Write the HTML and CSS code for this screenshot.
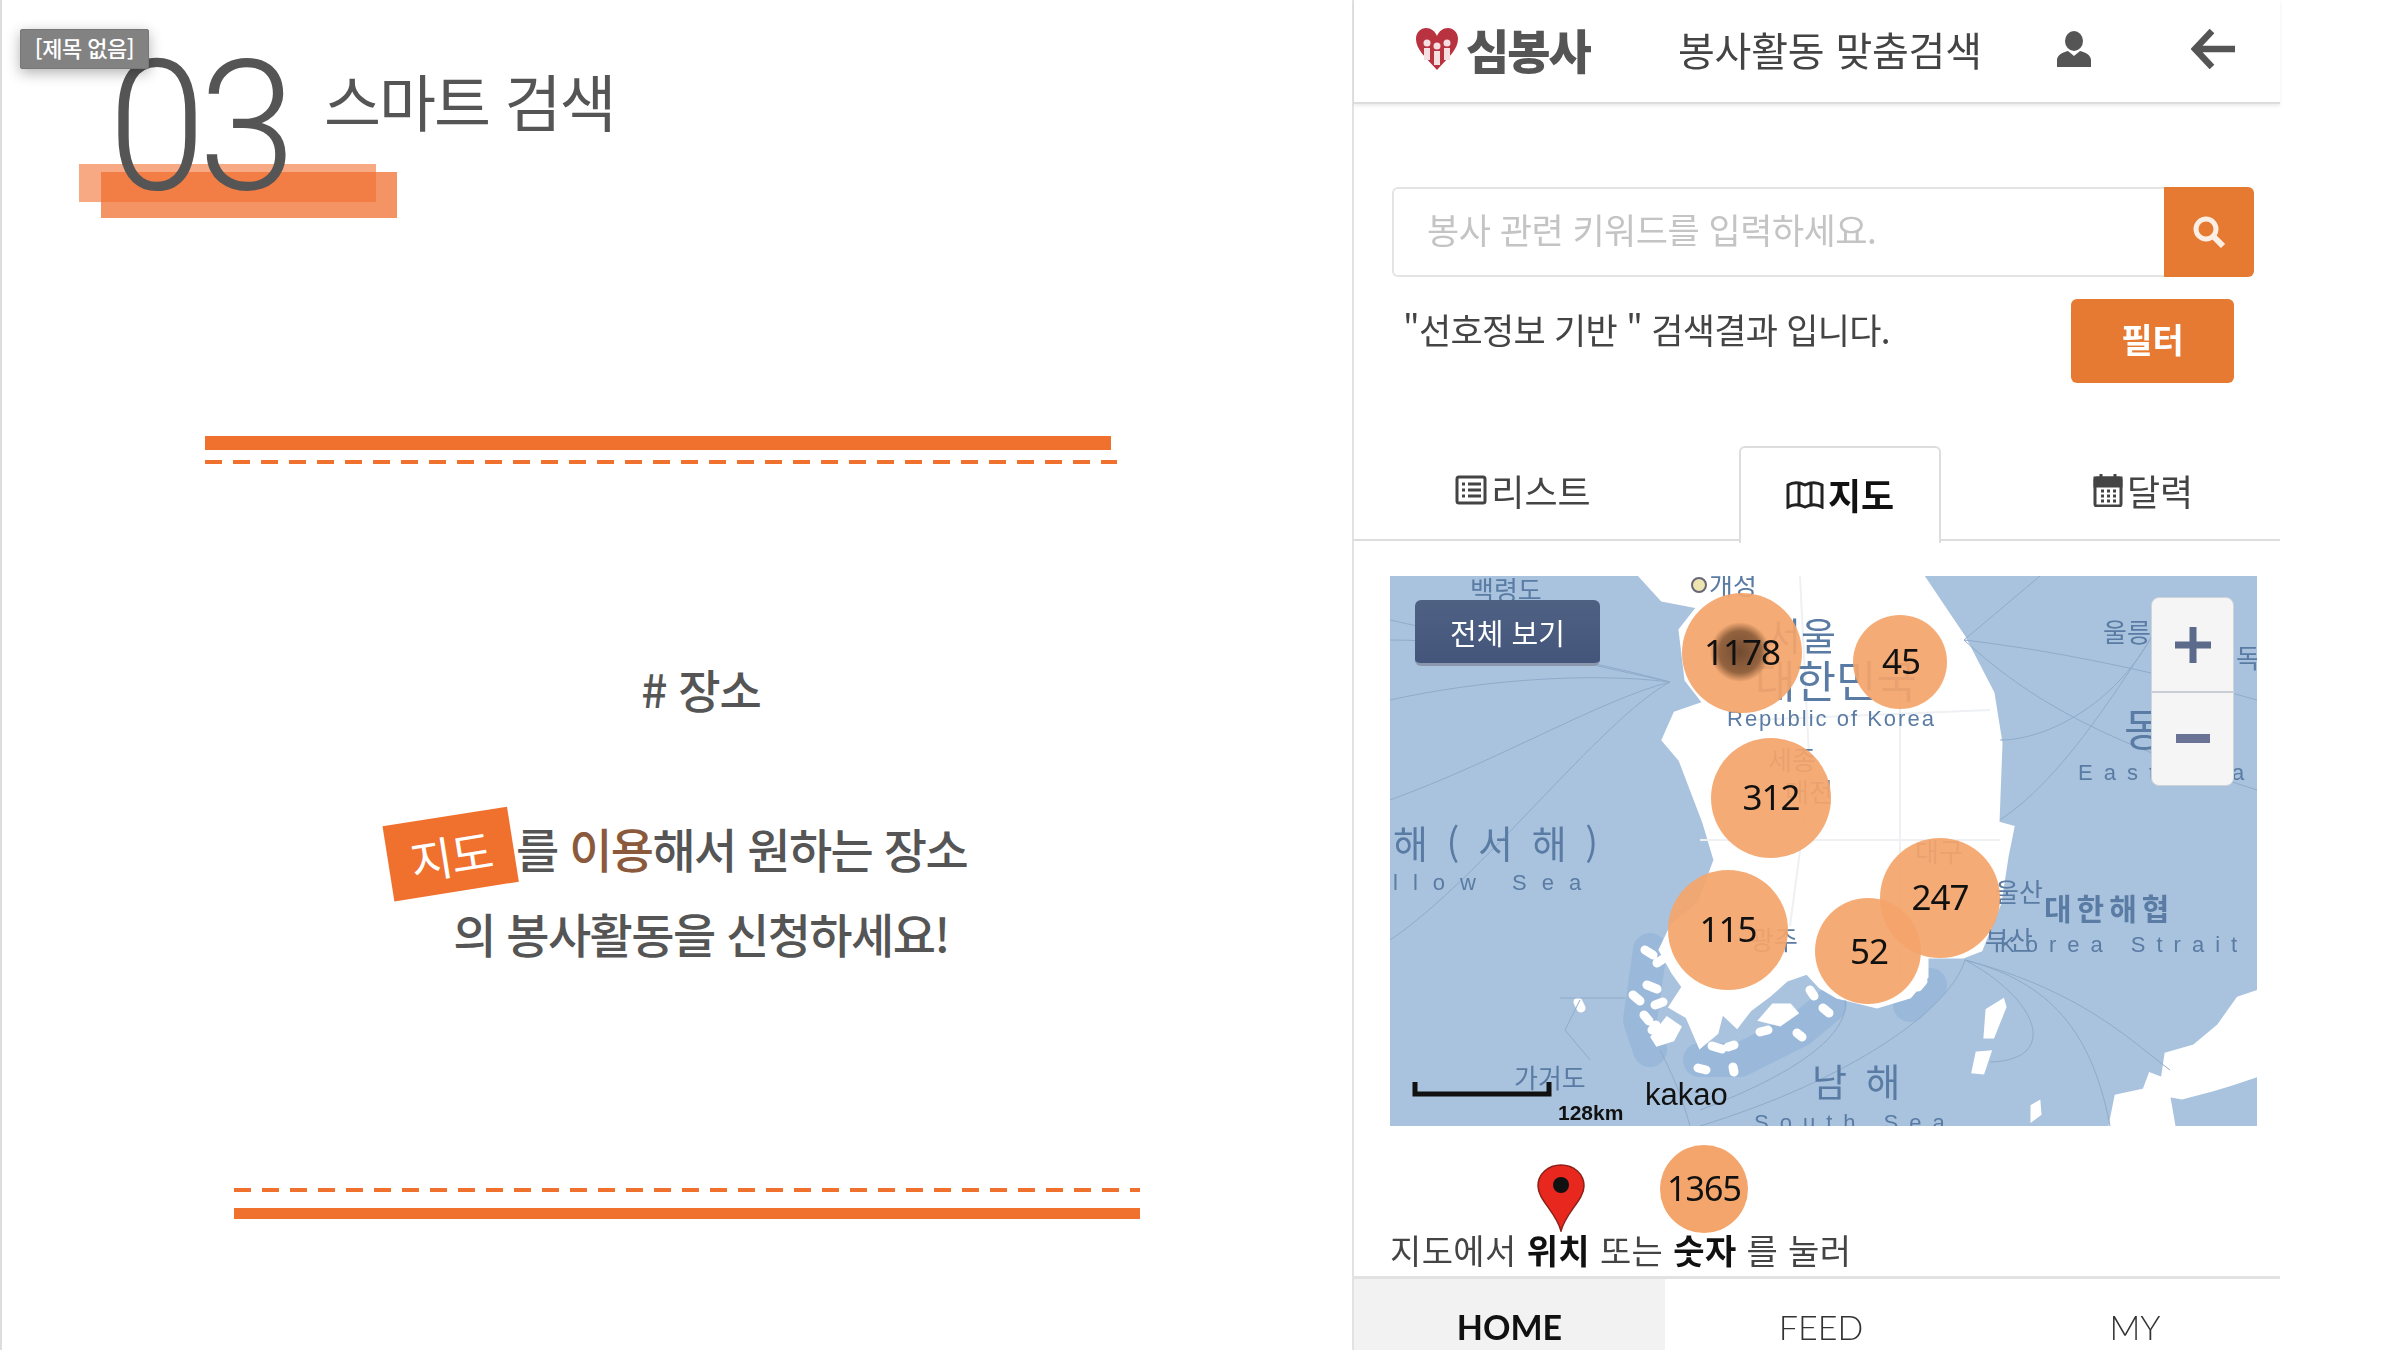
FILE: index.html
```html
<!DOCTYPE html>
<html lang="ko">
<head>
	<meta charset="UTF-8">
	<title>스마트 검색</title>
	<link rel="stylesheet" href="styles.css">
</head>
<body>
<div class="page">

	<!-- 왼쪽 슬라이드 -->
	<section class="slide">
		<span class="doc-title">[제목 없음]</span>
		<div class="head">
			<div class="num">
				<i class="mark mark-a"></i>
				<i class="mark mark-b"></i>
				<span>03</span>
			</div>
			<h1>스마트 검색</h1>
		</div>
		<div class="rule rule-top">
			<div class="solid"></div>
			<div class="dash"></div>
		</div>
		<div class="copy">
			<h2># 장소</h2>
			<p class="line-first"><b class="badge">지도</b>를 <em>이용</em>해서 원하는 장소</p>
			<p>의 봉사활동을 신청하세요!</p>
		</div>
		<div class="rule rule-bottom">
			<div class="dash"></div>
			<div class="solid"></div>
		</div>
	</section>

	<!-- 오른쪽 앱 화면 -->
	<section class="phone">
		<header class="topbar">
			<div class="logo">
				<svg width="44" height="44" viewBox="0 0 44 44">
					<path d="M22 43C10 30 1 22 1 12 1 5 6 1 11 1c5 0 9 3 11 8 2-5 6-8 11-8 5 0 10 4 10 11 0 10-9 18-21 31z" fill="#b8323f"/>
					<circle cx="12" cy="16" r="3.5" fill="#f6dfe0"/>
					<circle cx="22" cy="19" r="3.5" fill="#f6dfe0"/>
					<circle cx="32" cy="16" r="3.5" fill="#f6dfe0"/>
					<path d="M9 21h6v12H9zM19 24h6v14h-6zM29 21h6v12h-6z" fill="#f6dfe0"/>
				</svg>
				<span>심봉사</span>
			</div>
			<div class="topbar-title">봉사활동 맞춤검색</div>
			<svg class="icon-user" width="36" height="36" viewBox="0 0 36 36">
				<ellipse cx="18" cy="10" rx="9" ry="10" fill="#555"/>
				<path d="M1 36v-7c0-5 6-8 11-9l6 5 6-5c5 1 11 4 11 9v7z" fill="#555"/>
			</svg>
			<svg class="icon-back" width="44" height="44" viewBox="0 0 44 44">
				<path d="M21 4L4 22l17 18M5 22h39" fill="none" stroke="#555" stroke-width="6.5"/>
			</svg>
		</header>

		<div class="search">
			<div class="search-input">봉사 관련 키워드를 입력하세요.</div>
			<div class="search-btn">
				<svg width="36" height="36" viewBox="0 0 36 36">
					<circle cx="15" cy="15" r="10" fill="none" stroke="#fbeee4" stroke-width="5"/>
					<path d="M22 22l10 10" stroke="#fbeee4" stroke-width="6"/>
				</svg>
			</div>
		</div>

		<div class="result">
			<p>"선호정보 기반 " 검색결과 입니다.</p>
			<button class="filter">필터</button>
		</div>

		<nav class="tabs">
			<div class="tab tab-list">
				<svg width="32" height="30" viewBox="0 0 32 30">
					<rect x="2" y="2" width="28" height="26" rx="2" fill="none" stroke="#444" stroke-width="3"/>
					<path d="M7 9h3M13 9h13M7 15h3M13 15h13M7 21h3M13 21h13" stroke="#444" stroke-width="3"/>
				</svg>리스트
			</div>
			<div class="tab tab-map on">
				<svg width="38" height="30" viewBox="0 0 38 30">
					<path d="M2 6c5-3 11-3 17 0 6-3 12-3 17 0v22c-5-3-11-3-17 0-6-3-12-3-17 0zM13 4v22M25 4v22" fill="none" stroke="#222" stroke-width="3"/>
				</svg>지도
			</div>
			<div class="tab tab-cal">
				<svg width="30" height="34" viewBox="0 0 30 34">
					<rect x="2" y="5" width="26" height="28" rx="2" fill="none" stroke="#444" stroke-width="3"/>
					<path d="M2 5h26v8H2zM8 1v6M22 1v6" fill="#444" stroke="#444" stroke-width="3"/>
					<path d="M8 18h3M14 18h3M20 18h3M8 23h3M14 23h3M20 23h3M8 28h3M14 28h3M20 28h3" stroke="#444" stroke-width="3"/>
				</svg>달력
			</div>
		</nav>

		<div class="map">
			<svg class="map-svg" width="867" height="550" viewBox="1390 576 867 550">
				<defs>
					<radialGradient id="hot">
						<stop offset="0" stop-color="#5a3a25" stop-opacity=".85"/>
						<stop offset=".7" stop-color="#6a4428" stop-opacity=".7"/>
						<stop offset="1" stop-color="#6a4428" stop-opacity="0"/>
					</radialGradient>
				</defs>
				<rect x="1390" y="576" width="867" height="550" fill="#a9c3de"/>

				<!-- 섬 그림자 -->
				<path class="islet-shade" d="M1650 950L1640 1020 1650 1050M1700 1060L1740 1060 1800 1030 1830 1005M1910 1005L1930 985"/>

				<!-- 육지 -->
				<path class="land" d="M1640 576L1662 600 1698 607 1680 630 1686 680 1704 703 1675 713 1663 740 1680 760 1704 823 1715 860 1699 903 1672 925 1660 950 1673 973 1683 987 1670 1007 1687 1017 1700 1047 1717 1033 1722 1013 1737 1027 1750 1010 1770 995 1787 980 1807 973 1820 987 1837 997 1877 1007 1910 997 1927 977 1927 957 1963 957 1981 950 2000 903 2007 857 2013 827 1998 823 2001 743 1993 693 1964 637 1923 576z"/>
				<path class="land" d="M1652 1037L1667 1018 1680 1027 1673 1040 1657 1045zM1760 1020L1773 1005 1790 1005 1797 1013 1780 1025zM1987 1010L2003 1000 2005 1007 1993 1037 1985 1037zM1977 1053L1990 1052 1983 1073 1973 1072zM2262 990v84l-30 10-20 6-30 8-22-4 6-40 28-8 24-20 20-28zM2110 1126l6-30 28-6 6-16 16 6 8 46zM2032 1106l7-4 1 12-8 6z"/>
				<!-- 작은 섬 -->
				<path class="islets" d="M1645 950l8 5M1657 963l6-4M1647 985l10 4M1633 995l7 6M1655 1005l8-3M1644 1015l5 6M1652 1030l4-5M1712 1046l10 3M1728 1047l6-2M1760 1032l8-2M1797 1033l5 4M1698 1068l8 2M1733 1067l1 5M1823 1008l6 5M1810 990l4 6M1918 987l5-6M1578 1002l3 6"/>
				<path class="grid-line" d="M1800 576l10 200-20 150M1700 840l300 0M1900 640v340M1750 720l240-10"/>

				<!-- 뱃길 -->
				<path class="route" d="M1670 682C1590 660 1480 640 1390 640M1670 682C1590 672 1480 680 1390 700M1670 682C1600 700 1500 760 1390 800M1670 682C1600 720 1480 880 1390 940M1670 682L1390 620M1964 640C2050 650 2150 670 2257 700M1964 640C2030 700 2100 740 2257 790M1964 640L2040 576M2000 740C2050 740 2120 700 2155 630M2000 820C2060 780 2110 700 2150 640M1965 960C1950 1010 1850 1080 1700 1126M1965 960C2040 980 2090 1020 2110 1126M1965 960C2080 990 2130 1040 2170 1070M1965 960C2040 1000 2060 1060 1990 1062M1845 1000C1850 1040 1780 1080 1700 1110M1690 1126C1680 1090 1670 1070 1660 1050M1560 998H1625M1580 1000L1565 1030 1590 1060"/>

				<!-- 지명 -->
				<circle class="city-dot" cx="1699" cy="585" r="7"/>
				<text class="lb lb-s" x="1709" y="595">개성</text>
				<text class="lb lb-s" x="1470" y="600">백령도</text>
				<text class="lb lb-m" x="1766" y="650">서울</text>
				<text class="lb lb-l" x="1755" y="698">대한민국</text>
				<text class="lb lb-en" x="1727" y="726">Republic of Korea</text>
				<text class="lb lb-s" x="1768" y="770">세종</text>
				<text class="lb lb-s" x="1785" y="802">대전</text>
				<text class="lb lb-m lb-m-sp" x="1393" y="858">해 ( 서 해 )</text>
				<text class="lb lb-en lb-sp-w" x="1393" y="890">llow Sea</text>
				<text class="lb lb-s" x="1915" y="862">대구</text>
				<text class="lb lb-s" x="1995" y="902">울산</text>
				<text class="lb lb-s" x="1985" y="950">부산</text>
				<text class="lb lb-s" x="1750" y="950">광주</text>
				<text class="lb lb-b" x="2044" y="920">대한해협</text>
				<text class="lb lb-en lb-sp" x="2000" y="952">Korea Strait</text>
				<text class="lb lb-s" x="2103" y="642">울릉</text>
				<text class="lb lb-s" x="2236" y="668">독도</text>
				<text class="lb lb-l" x="2124" y="746">동해</text>
				<text class="lb lb-en lb-sp" x="2078" y="780">East Sea</text>
				<text class="lb lb-m lb-m-sp" x="1812" y="1096">남 해</text>
				<text class="lb lb-en lb-sp" x="1754" y="1130">South Sea</text>
				<text class="lb lb-s" x="1514" y="1088">가거도</text>

				<!-- 축척 -->
				<path class="scale" d="M1415 1082v12h134v-12"/>
				<text class="scale-text" x="1558" y="1120">128km</text>
				<text class="kakao" x="1645" y="1105">kakao</text>

				<!-- 클러스터 -->
				<g class="clusters">
					<circle cx="1742" cy="653" r="60"/>
					<circle cx="1900" cy="662" r="47"/>
					<circle cx="1771" cy="798" r="60"/>
					<circle cx="1728" cy="930" r="60"/>
					<circle cx="1940" cy="898" r="60"/>
					<circle cx="1868" cy="951" r="53"/>
				</g>
				<circle cx="1740" cy="652" r="30" fill="url(#hot)"/>
				<g class="counts">
					<text x="1742" y="665">1178</text>
					<text x="1901" y="674">45</text>
					<text x="1771" y="810">312</text>
					<text x="1728" y="942">115</text>
					<text x="1940" y="910">247</text>
					<text x="1869" y="964">52</text>
				</g>
			</svg>
			<button class="view-all">전체 보기</button>
			<div class="zoom">
				<div class="zoom-btn">
					<svg width="40" height="40" viewBox="0 0 40 40"><path d="M20 2v36M2 20h36" stroke="#5c6a8c" stroke-width="7"/></svg>
				</div>
				<div class="zoom-btn">
					<svg width="34" height="10" viewBox="0 0 34 10"><rect width="34" height="9" fill="#6a7396"/></svg>
				</div>
			</div>
		</div>

		<div class="legend">
			<svg class="pin" width="50" height="68" viewBox="0 0 50 68">
				<path d="M25 67C20 48 2 36 2 22 2 10 12 1 25 1s23 9 23 21c0 14-18 26-23 45z" fill="#e8281e" stroke="#8c2018" stroke-width="1.5"/>
				<circle cx="25" cy="21" r="8" fill="#111"/>
			</svg>
			<div class="legend-count">1365</div>
		</div>
		<p class="guide">지도에서 <b>위치</b> 또는 <b>숫자</b> 를 눌러</p>

		<footer class="bottom">
			<div class="bottom-item on">HOME</div>
			<div class="bottom-item">FEED</div>
			<div class="bottom-item">MY</div>
		</footer>
	</section>
</div>
</body>
</html>
```

FILE: styles.css
```css
* {
	margin: 0;
	padding: 0;
	box-sizing: border-box;
}

html, body {
	height: 100%;
	overflow: hidden;
	background-color: #fff;
}

body {
	font-family: "Noto Sans CJK KR", "Noto Sans", sans-serif;
	color: #555;
}

.page {
	display: grid;
	grid-template-columns: 1352px 928px;
	height: 1350px;
}

/* 왼쪽 슬라이드 */
.slide {
	position: relative;
	border-left: 2px solid #ddd;
}

.doc-title {
	position: absolute;
	top: 29px;
	left: 18px;
	z-index: 2;
	width: 129px;
	height: 40px;
	background-color: #828282;
	border: 1px solid #777;
	border-radius: 2px;
	box-shadow: 0 4px 14px rgba(0, 0, 0, .3);
	color: #fff;
	font-size: 22px;
	font-weight: 500;
	line-height: 35px;
	letter-spacing: -.5px;
	text-align: center;
}

.head {
	display: flex;
	height: 436px;
	padding: 0 0 0 110px;
}

.num {
	position: relative;
	width: 214px;
	height: 240px;
	color: #555;
	font-family: "Roboto", sans-serif;
	font-size: 182px;
	font-weight: 300;
	line-height: 254px;
	letter-spacing: -8px;
}

.num span {
	position: relative;
	display: inline-block;
	margin-left: -4px;
	transform: scaleX(.97);
	transform-origin: left;
}

.mark {
	position: absolute;
}

.mark-a {
	top: 164px;
	left: -33px;
	width: 297px;
	height: 38px;
	background-color: rgba(240, 112, 48, .6);
}

.mark-b {
	top: 172px;
	left: -11px;
	width: 296px;
	height: 46px;
	background-color: rgba(240, 112, 48, .75);
}

.head h1 {
	margin: 60px 0 0 -2px;
	font-size: 62px;
	font-weight: 400;
	line-height: 80px;
	letter-spacing: -2px;
	color: #555;
}

.rule {
	display: flex;
	flex-direction: column;
	width: 912px;
}

.rule-top {
	margin-left: 203px;
	gap: 10px;
}

.rule-bottom {
	width: 906px;
	margin-left: 232px;
	gap: 16px;
}

.solid {
	width: 906px;
	height: 14px;
	background-color: #f0702e;
}

.rule-bottom .solid {
	height: 11px;
}

.dash {
	height: 4px;
	background: repeating-linear-gradient(90deg, #f0702e 0, #f0702e 17px, transparent 17px, transparent 28px);
}

.copy {
	height: 724px;
	padding: 194px 0 0 48px;
	text-align: center;
}

.copy h2 {
	margin-bottom: 91px;
	font-size: 46px;
	font-weight: 500;
	line-height: 60px;
	letter-spacing: -1px;
}

.copy p {
	font-size: 47px;
	font-weight: 500;
	line-height: 77px;
	letter-spacing: -1.6px;
}

.line-first {
	padding-right: 47px;
}

.copy em {
	font-style: normal;
	color: #8b5a3c;
}

.badge {
	display: inline-block;
	width: 126px;
	height: 76px;
	margin-right: 2px;
	background-color: #f0702e;
	color: #fff;
	font-size: 46px;
	font-weight: 400;
	line-height: 76px;
	transform: rotate(-9deg) translate(0, -2px);
	vertical-align: -8px;
}

/* 오른쪽 앱 화면 */
.phone {
	display: flex;
	flex-direction: column;
	height: 1350px;
	border-left: 2px solid #e2e2e2;
	filter: blur(.5px);
}

.topbar {
	display: flex;
	align-items: center;
	height: 104px;
	padding: 0 42px 5px 61px;
	border-bottom: 2px solid #ddd;
	box-shadow: 0 2px 3px rgba(0, 0, 0, .08);
}

.logo {
	display: flex;
	align-items: center;
	gap: 7px;
	width: 263px;
	font-size: 47px;
	font-weight: 900;
	letter-spacing: -2px;
}

.topbar-title {
	width: 378px;
	font-size: 40px;
	color: #444;
	letter-spacing: -.2px;
	white-space: nowrap;
}

.icon-back {
	margin-left: 99px;
}

.search {
	display: flex;
	height: 90px;
	margin: 83px 26px 0 38px;
}

.search-input {
	flex: 1;
	padding-left: 33px;
	border: 2px solid #e4e4e4;
	border-right: none;
	border-radius: 6px 0 0 6px;
	color: #c4c4c4;
	font-size: 35px;
	line-height: 80px;
	letter-spacing: -.5px;
}

.search-btn {
	display: flex;
	align-items: center;
	justify-content: center;
	width: 90px;
	background-color: #e67a33;
	border-radius: 0 6px 6px 0;
}

.result {
	display: flex;
	justify-content: space-between;
	height: 84px;
	margin: 22px 46px 0 49px;
}

.result p {
	font-size: 35px;
	line-height: 60px;
	color: #444;
	letter-spacing: -.7px;
}

.filter {
	width: 163px;
	height: 84px;
	padding-bottom: 5px;
	border: none;
	border-radius: 6px;
	background-color: #e67a33;
	color: #fff;
	font-family: inherit;
	font-size: 34px;
	font-weight: 700;
}

.tabs {
	display: flex;
	height: 158px;
	padding: 63px 0 0 0;
	border-bottom: 2px solid #ddd;
}

.tab {
	display: flex;
	align-items: center;
	justify-content: center;
	gap: 4px;
	width: 202px;
	height: 95px;
	padding-bottom: 8px;
	font-size: 36px;
	color: #444;
}

.tab-list {
	margin: 0 115px 0 68px;
}

.tab-cal {
	margin-left: 101px;
}

.tab.on {
	height: 97px;
	padding-top: 0;
	padding-bottom: 4px;
	background-color: #fff;
	border: 2px solid #ddd;
	border-bottom: none;
	border-radius: 6px 6px 0 0;
	color: #111;
	font-weight: 700;
}

.map {
	position: relative;
	width: 867px;
	height: 550px;
	margin: 35px 0 0 36px;
	overflow: hidden;
}

.map-svg {
	display: block;
}

.land {
	fill: #fff;
	stroke: #fff;
	stroke-width: 3;
}

.islets {
	fill: none;
	stroke: #fff;
	stroke-width: 9;
	stroke-linecap: round;
}

.islet-shade {
	fill: none;
	stroke: #9ab8da;
	stroke-width: 34;
	stroke-linecap: round;
	stroke-linejoin: round;
}

.grid-line {
	fill: none;
	stroke: #eef0f3;
	stroke-width: 2;
}

.route {
	fill: none;
	stroke: #8fabca;
	stroke-width: 1;
}

.city-dot {
	fill: #eee4b0;
	stroke: #667;
	stroke-width: 2;
}

.lb {
	fill: #5a7ba3;
}

.lb-s {
	font-size: 26px;
}

.lb-m {
	font-size: 38px;
}

.lb-m-sp {
	letter-spacing: 4px;
}

.lb-l {
	font-size: 44px;
}

.lb-b {
	font-size: 30px;
	font-weight: 700;
	letter-spacing: 5px;
}

.lb-en {
	font-family: "Liberation Sans", sans-serif;
	font-size: 22px;
	letter-spacing: 2px;
}

.lb-sp {
	letter-spacing: 11px;
}

.lb-sp-w {
	letter-spacing: 15px;
}

.scale {
	fill: none;
	stroke: #111;
	stroke-width: 5;
}

.scale-text {
	font-family: "Liberation Sans", sans-serif;
	font-size: 21px;
	font-weight: 700;
	fill: #111;
}

.kakao {
	font-family: "Liberation Sans", sans-serif;
	font-size: 31px;
	fill: #111;
}

.clusters circle {
	fill: #f4a56b;
	fill-opacity: .93;
}

.counts text {
	font-family: "Noto Sans", sans-serif;
	font-size: 35px;
	letter-spacing: -1px;
	fill: #111;
	text-anchor: middle;
}

.view-all {
	position: absolute;
	top: 24px;
	left: 25px;
	width: 185px;
	height: 66px;
	border: none;
	border-bottom: 3px solid #8b97ad;
	border-radius: 6px;
	background: linear-gradient(#4f6183, #43557a);
	color: #fff;
	font-family: inherit;
	font-size: 29px;
}

.zoom {
	position: absolute;
	top: 21px;
	left: 761px;
	width: 83px;
	height: 189px;
	background-color: #f5f5f5;
	border: 1px solid #cfd3da;
	border-radius: 8px;
}

.zoom-btn {
	display: flex;
	align-items: center;
	justify-content: center;
	height: 93px;
}

.zoom-btn + .zoom-btn {
	border-top: 2px solid #c9cdd4;
}

.legend {
	display: flex;
	align-items: flex-start;
	height: 102px;
	padding: 19px 0 0 182px;
}

.pin {
	margin-top: 19px;
}

.legend-count {
	width: 88px;
	height: 88px;
	margin-left: 74px;
	border-radius: 50%;
	background-color: #f4a56b;
	color: #111;
	font-family: "Noto Sans", sans-serif;
	font-size: 34px;
	letter-spacing: -1px;
	line-height: 86px;
	text-align: center;
}

.guide {
	height: 48px;
	padding-left: 36px;
	font-size: 34px;
	line-height: 44px;
	color: #444;
	letter-spacing: .4px;
	white-space: nowrap;
}

.guide b {
	color: #111;
}

.bottom {
	display: flex;
	flex: 1;
	overflow: hidden;
	border-top: 3px solid #e2e2e2;
}

.bottom-item {
	flex: none;
	width: 312px;
	padding-top: 27px;
	font-family: "Lato", sans-serif;
	font-size: 34px;
	font-weight: 300;
	color: #333;
	text-align: center;
}

.bottom-item:last-child {
	width: 316px;
}

.bottom-item.on {
	width: 311px;
	background-color: #f2f2f2;
	font-weight: 700;
	color: #111;
}
```
